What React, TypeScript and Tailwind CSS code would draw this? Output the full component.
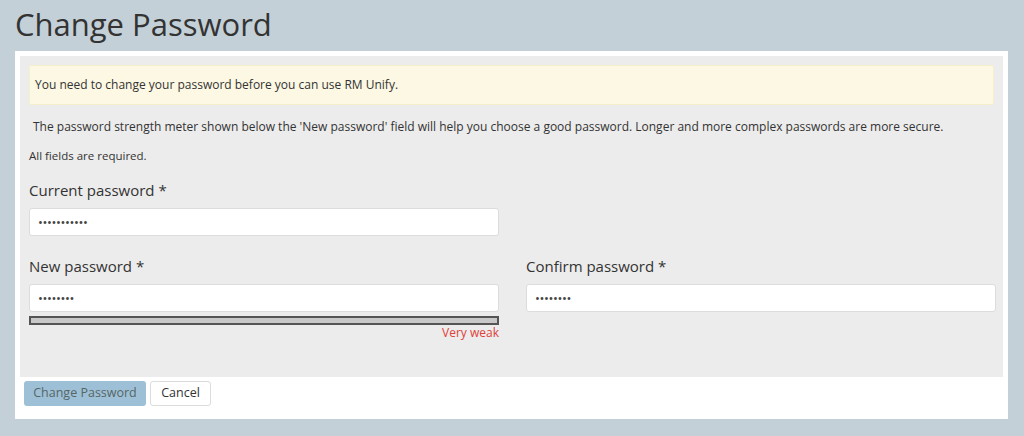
import React from "react";

const font = { fontFamily: '"Open Sans", "Liberation Sans", sans-serif' };

function Field({ label, dots }: { label: string; dots: number }) {
  return (
    <div className="flex flex-col">
      <label className="text-[15px] leading-[20px] text-[#333] mb-[8px]">{label}</label>
      <div className="h-[28px] bg-white border border-[#dcdcdc] rounded-[3px] flex items-center pl-[8px]">
        <span className="text-[#444] text-[13px] tracking-[-0.4px] leading-none">{"•".repeat(dots)}</span>
      </div>
    </div>
  );
}

export default function App() {
  return (
    <div className="w-[1024px] h-[436px] bg-[#c4d0d7] text-[#333] overflow-hidden" style={font}>
      <h1 className="pl-[15px] pt-[4px] h-[51px] text-[31px] leading-[40px] font-normal text-[#333]">Change Password</h1>
      <div className="ml-[15px] w-[993px] bg-white p-[5px] pb-[13px]">
        <div className="bg-[#ececec] h-[321px] pt-[9px] pl-[9px] pr-[9px]">
          <div className="h-[40px] bg-[#fcf8e3] border border-[#f6efcc] rounded-[2px] flex items-center pl-[5px] text-[12px] text-[#333]">
            You need to change your password before you can use RM Unify.
          </div>
          <p className="mt-[13px] pl-[4px] text-[12px] leading-[18px] text-[#333]">
            The password strength meter shown below the 'New password' field will help you choose a good password. Longer and more complex passwords are more secure.
          </p>
          <p className="mt-[12px] text-[11.5px] leading-[16px] text-[#333]">All fields are required.</p>
          <div className="mt-[16px] w-[470px]">
            <Field label="Current password *" dots={11} />
          </div>
          <div className="mt-[20px] grid grid-cols-[470px_470px] gap-[27px]">
            <div>
              <Field label="New password *" dots={8} />
              <div className="mt-[4px] h-[9px] bg-[#c8c8c8] border-2 border-[#555]"></div>
              <div className="text-right text-[12px] leading-[16px] text-[#e0403a]">Very weak</div>
            </div>
            <div>
              <Field label="Confirm password *" dots={8} />
            </div>
          </div>
        </div>
        <div className="flex gap-[4px] mt-[4px] pl-[4px]">
          <button className="h-[25px] w-[122px] rounded-[3px] bg-[#9ec0d7] text-[#566] text-[12.5px]">Change Password</button>
          <button className="h-[25px] w-[61px] rounded-[3px] bg-white border border-[#dcdcdc] text-[#333] text-[12.5px]">Cancel</button>
        </div>
      </div>
    </div>
  );
}
